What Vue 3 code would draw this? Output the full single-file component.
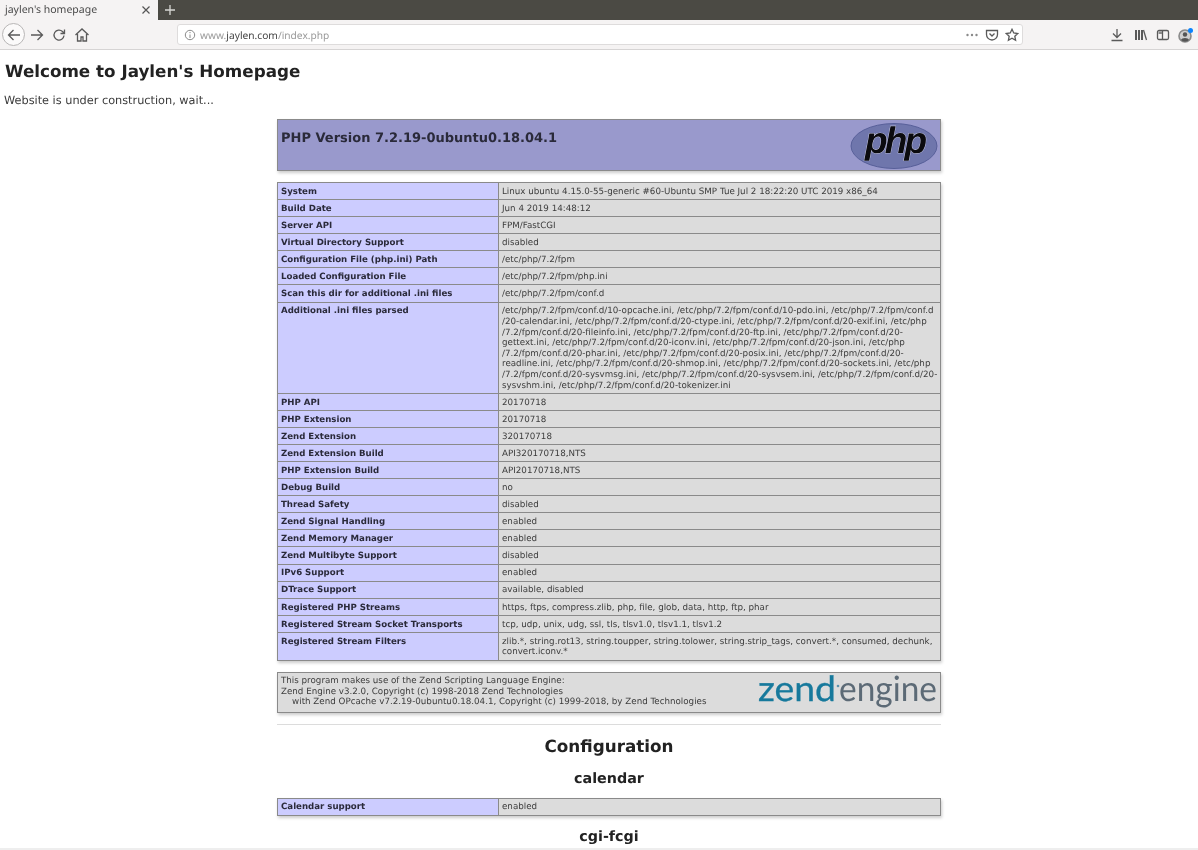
<script setup>
const rows = [
  ['System', 'Linux ubuntu 4.15.0-55-generic #60-Ubuntu SMP Tue Jul 2 18:22:20 UTC 2019 x86_64'],
  ['Build Date', 'Jun 4 2019 14:48:12'],
  ['Server API', 'FPM/FastCGI'],
  ['Virtual Directory Support', 'disabled'],
  ['Configuration File (php.ini) Path', '/etc/php/7.2/fpm'],
  ['Loaded Configuration File', '/etc/php/7.2/fpm/php.ini'],
  ['Scan this dir for additional .ini files', '/etc/php/7.2/fpm/conf.d'],
  ['Additional .ini files parsed', `/etc/php/7.2/fpm/conf.d/10-opcache.ini, /etc/php/7.2/fpm/conf.d/10-pdo.ini, /etc/php/7.2/fpm/conf.d
/20-calendar.ini, /etc/php/7.2/fpm/conf.d/20-ctype.ini, /etc/php/7.2/fpm/conf.d/20-exif.ini, /etc/php
/7.2/fpm/conf.d/20-fileinfo.ini, /etc/php/7.2/fpm/conf.d/20-ftp.ini, /etc/php/7.2/fpm/conf.d/20-
gettext.ini, /etc/php/7.2/fpm/conf.d/20-iconv.ini, /etc/php/7.2/fpm/conf.d/20-json.ini, /etc/php
/7.2/fpm/conf.d/20-phar.ini, /etc/php/7.2/fpm/conf.d/20-posix.ini, /etc/php/7.2/fpm/conf.d/20-
readline.ini, /etc/php/7.2/fpm/conf.d/20-shmop.ini, /etc/php/7.2/fpm/conf.d/20-sockets.ini, /etc/php
/7.2/fpm/conf.d/20-sysvmsg.ini, /etc/php/7.2/fpm/conf.d/20-sysvsem.ini, /etc/php/7.2/fpm/conf.d/20-
sysvshm.ini, /etc/php/7.2/fpm/conf.d/20-tokenizer.ini`],
  ['PHP API', '20170718'],
  ['PHP Extension', '20170718'],
  ['Zend Extension', '320170718'],
  ['Zend Extension Build', 'API320170718,NTS'],
  ['PHP Extension Build', 'API20170718,NTS'],
  ['Debug Build', 'no'],
  ['Thread Safety', 'disabled'],
  ['Zend Signal Handling', 'enabled'],
  ['Zend Memory Manager', 'enabled'],
  ['Zend Multibyte Support', 'disabled'],
  ['IPv6 Support', 'enabled'],
  ['DTrace Support', 'available, disabled'],
  ['Registered PHP Streams', 'https, ftps, compress.zlib, php, file, glob, data, http, ftp, phar'],
  ['Registered Stream Socket Transports', 'tcp, udp, unix, udg, ssl, tls, tlsv1.0, tlsv1.1, tlsv1.2'],
  ['Registered Stream Filters', `zlib.*, string.rot13, string.toupper, string.tolower, string.strip_tags, convert.*, consumed, dechunk,
convert.iconv.*`],
]
const zendText = `This program makes use of the Zend Scripting Language Engine:
Zend Engine v3.2.0, Copyright (c) 1998-2018 Zend Technologies
    with Zend OPcache v7.2.19-0ubuntu0.18.04.1, Copyright (c) 1999-2018, by Zend Technologies`
</script>

<template>
  <div class="browser">
    <div class="tabbar">
      <div class="tab">
        <span class="tab-title">jaylen's homepage</span>
        <svg class="tab-x" viewBox="0 0 10 10" width="10" height="10"><path d="M1.500 1.500l7 7M8.500 1.500l-7 7" /></svg>
      </div>
      <svg class="new-tab" viewBox="0 0 12 12" width="12" height="12"><path d="M6 1v10M1 6h10" /></svg>
    </div>
    <div class="toolbar">
      <div class="nav">
        <div class="back">
          <svg viewBox="0 0 16 16" width="16" height="16"><path d="M14 8H3M7.500 3L2.500 8l5 5" /></svg>
        </div>
        <svg class="fwd" viewBox="0 0 16 16" width="16" height="16"><path d="M2 8h11M8.500 3l5 5-5 5" /></svg>
        <svg class="reload" viewBox="0 0 16 16" width="16" height="16"><path d="M13 8.500A5 5 0 1 1 11.500 4.500L13.500 6.500M13.500 2.500v4h-4" /></svg>
        <svg class="home" viewBox="0 0 16 16" width="16" height="16"><path d="M1.500 8L8 2l6.500 6M3.500 7v7h3.500v-4h2v4h3.500V7" /></svg>
      </div>
      <div class="urlbar">
        <svg class="info" viewBox="0 0 12 12" width="12" height="12"><circle cx="6" cy="6" r="4.700" /><path d="M6 5.500V9M6 3v1.200" /></svg>
        <span class="url"><span class="dim">www.</span><span class="dom">jaylen.com</span><span class="dim">/index.php</span></span>
        <svg class="dots" viewBox="0 0 12 4" width="12" height="4"><circle class="fill" cx="1.500" cy="2" r="1.200" /><circle class="fill" cx="6" cy="2" r="1.200" /><circle class="fill" cx="10.500" cy="2" r="1.200" /></svg>
        <svg class="pocket" viewBox="0 0 14 14" width="14" height="14"><path d="M1.500 2.500h11v4a5.500 5.500 0 0 1-11 0zM4.500 5.500L7 8l2.500-2.500" /></svg>
        <svg class="star" viewBox="0 0 14 14" width="14" height="14"><path d="M7 1.300l1.750 3.700 4 .5-2.950 2.750.8 4L7 10.300l-3.600 1.950.8-4L1.250 5.500l4-.5z" /></svg>
      </div>
      <div class="tools">
        <svg viewBox="0 0 14 14" width="14" height="14"><path d="M7 1v8.500M3 5.500l4 4 4-4M1.500 12.500h11" /></svg>
        <svg class="lib" viewBox="0 0 14 14" width="14" height="14"><path d="M2 2v10M5 2v10M8 2v10" /><path d="M9.500 2l3 10" /></svg>
        <svg viewBox="0 0 14 14" width="14" height="14"><rect x="1.500" y="2.500" width="11" height="9" rx="1.500" /><path d="M6.500 2.500v9" /><path class="fill" d="M2.500 3.500h3.500v2.500H2.500z" /></svg>
        <div class="account">
          <svg viewBox="0 0 14 14" width="14" height="14"><circle class="ring" cx="7" cy="7" r="6" /><circle class="fill dark" cx="7" cy="5.500" r="2.200" /><path class="fill dark" d="M3 11c.5-2.800 7.500-2.800 8 0a5.500 5.500 0 0 1-8 0z" /></svg>
          <span class="badge"></span>
        </div>
      </div>
    </div>

    <main class="page">
      <h1 class="welcome">Welcome to Jaylen's Homepage</h1>
      <p class="intro">Website is under construction, wait...</p>

      <div class="center">
        <div class="banner">
          <h2 class="version">PHP Version 7.2.19-0ubuntu0.18.04.1</h2>
          <svg class="php-logo" viewBox="0 0 88 46" width="88" height="46">
            <ellipse cx="44" cy="23" rx="43" ry="22.500" fill="#6f76ac" stroke="#4d5690" stroke-width=".8" />
            <text x="15" y="30" textLength="62" lengthAdjust="spacing" class="php-word">php</text>
          </svg>
        </div>

        <table class="info-table">
          <tbody>
            <tr v-for="r in rows" :key="r[0]">
              <td class="e">{{ r[0] }}</td>
              <td class="v">{{ r[1] }}</td>
            </tr>
          </tbody>
        </table>

        <div class="zend">
          <div class="zend-text">{{ zendText }}</div>
          <svg class="zend-logo" viewBox="0 0 182 39" width="182" height="39">
            <text x="0" y="28" textLength="78" lengthAdjust="spacingAndGlyphs" class="z1">zend</text>
            <circle cx="80" cy="13" r="1.300" fill="#5a93ad" />
            <text x="81" y="28" textLength="98" lengthAdjust="spacingAndGlyphs" class="z2">engine</text>
          </svg>
        </div>

        <hr class="rule" />
        <h2 class="config">Configuration</h2>
        <h2 class="module">calendar</h2>
        <table class="info-table cal">
          <tbody>
            <tr><td class="e">Calendar support</td><td class="v">enabled</td></tr>
          </tbody>
        </table>
        <h2 class="module next">cgi-fcgi</h2>
      </div>
    </main>
    <div class="bottom-line"></div>
  </div>
</template>

<style>
html, body { margin: 0; background: #fff; overflow: hidden; }
</style>

<style scoped>
.browser { width: 1198px; height: 850px; overflow: hidden; position: relative; font-family: "DejaVu Sans", sans-serif; color: #2b2b2b; background: #fff; text-rendering: geometricPrecision; filter: blur(.35px); }
.tabbar { height: 20px; background: #4b4a44; display: flex; align-items: center; }
.tab { width: 158px; height: 20px; background: #f5f3f3; display: flex; align-items: center; justify-content: space-between; padding: 0 7px 1px 5px; box-sizing: border-box; }
.tab-title { font: 10.500px "Noto Sans", sans-serif; color: #4a4a4a; }
.tab-x { fill: none; stroke: #555; stroke-width: 1.200; }
.new-tab { margin: 0 0 1px 6px; fill: none; stroke: #d8d8d4; stroke-width: 1.300; }
.toolbar { height: 29px; background: #f5f3f3; border-bottom: 1px solid #d6d4d4; display: flex; align-items: center; }
.toolbar svg { fill: none; stroke: #5a5a5a; stroke-width: 1.300; }
.toolbar svg .fill { fill: #8a8a8a; stroke: none; }
.toolbar svg .dark { fill: #555; }
.toolbar svg .ring { fill: #cfcfcf; stroke: #8a8a8a; stroke-width: 1.600; }
.toolbar .lib path:first-child { stroke-width: 2; }
.nav { width: 177px; display: flex; align-items: center; padding-left: 2px; box-sizing: border-box; }
.back { width: 23px; height: 23px; border: 1px solid #b8b6b6; border-radius: 50%; background: #fbfafa; display: flex; align-items: center; justify-content: center; box-sizing: border-box; }
.fwd { margin-left: 4px; }
.reload { margin-left: 6px; }
.home { margin-left: 7px; }
.urlbar { width: 846px; height: 21px; background: #fff; border: 1px solid #dedcdc; border-radius: 3px; box-sizing: border-box; display: flex; align-items: center; padding: 0 3px 0 6px; }
.toolbar .info { stroke: #8a8a8a; stroke-width: 1; }
.url { margin-left: 4px; font: 10.200px "Noto Sans", sans-serif; flex: 1; }
.dim { color: #9a9a9a; }
.dom { color: #444; }
.dots { margin-right: 7px; }
.pocket { margin-right: 6px; }
.tools { display: flex; align-items: center; margin-left: 87px; }
.tools > * { flex: none; margin-left: 8px; }
.tools > :first-child { margin-left: 0; margin-right: 2px; }
.account { position: relative; width: 14px; height: 14px; }
.badge { position: absolute; top: 0; right: -1px; width: 5px; height: 5px; border-radius: 50%; background: #0a84ff; }
.page { display: block; }
.welcome { margin: 11px 0 0 5px; font-size: 16.750px; line-height: 21px; font-weight: 700; color: #222; }
.intro { margin: 11px 0 0 4px; font-size: 11.300px; line-height: 15px; color: #3a3a3a; }
.center { width: 664px; margin: 11px 0 0 277px; }
.banner { height: 52px; box-sizing: border-box; background: #9999cc; border: 1px solid #8a8a8a; box-shadow: 1px 2px 3px #ccc; display: flex; justify-content: space-between; padding: 3px 2px 0 3px; }
.version { margin: 8px 0 0; font-size: 13px; line-height: 16px; color: #2a2a3a; font-weight: 700; }
.php-logo { flex: none; overflow: visible; }
.php-word { font: italic 700 37px "Liberation Sans", sans-serif; fill: #0b0b0f; stroke: #d8d9ee; stroke-width: .7; paint-order: stroke; }
.info-table { margin-top: 11px; width: 664px; table-layout: fixed; border-collapse: collapse; box-shadow: 1px 2px 3px #ccc; font-size: 8.730px; }
.info-table td { border: 1px solid #8a8a8a; padding: 3.800px 3px 1.700px; line-height: 10.600px; vertical-align: top; white-space: pre; }
.e { width: 221px; box-sizing: border-box; background: #ccccff; font-weight: 700; font-size: 8.620px; color: #2a2a3a; }
.v { background: #dcdcdc; color: #3c3c3c; }
.zend { margin-top: 11px; height: 41px; box-sizing: border-box; background: #dcdcdc; border: 1px solid #8a8a8a; box-shadow: 1px 2px 3px #ccc; display: flex; justify-content: space-between; align-items: center; padding: 0 0 0 3px; }
.zend-text { font-size: 8.730px; line-height: 10.600px; color: #3c3c3c; white-space: pre; }
.zend-logo { flex: none; overflow: visible; }
.z1 { font: 400 35px "Lato", sans-serif; fill: #17799c; stroke: #17799c; stroke-width: .3; }
.z2 { font: 400 35px "Lato", sans-serif; fill: #5c6a76; }
.rule { margin: 11px 0 0; border: 0; height: 1px; background: #dcdcdc; }
.config { margin: 10px 0 0; text-align: center; font-size: 16.800px; line-height: 22px; color: #222; }
.module { margin: 14px 0 0; text-align: center; font-size: 14.300px; line-height: 17px; color: #222; }
.cal { margin-top: 10px; }
.module.next { margin-top: 13px; }
.bottom-line { position: absolute; left: 0; right: 0; bottom: 0; height: 2px; background: #eee; }
</style>
